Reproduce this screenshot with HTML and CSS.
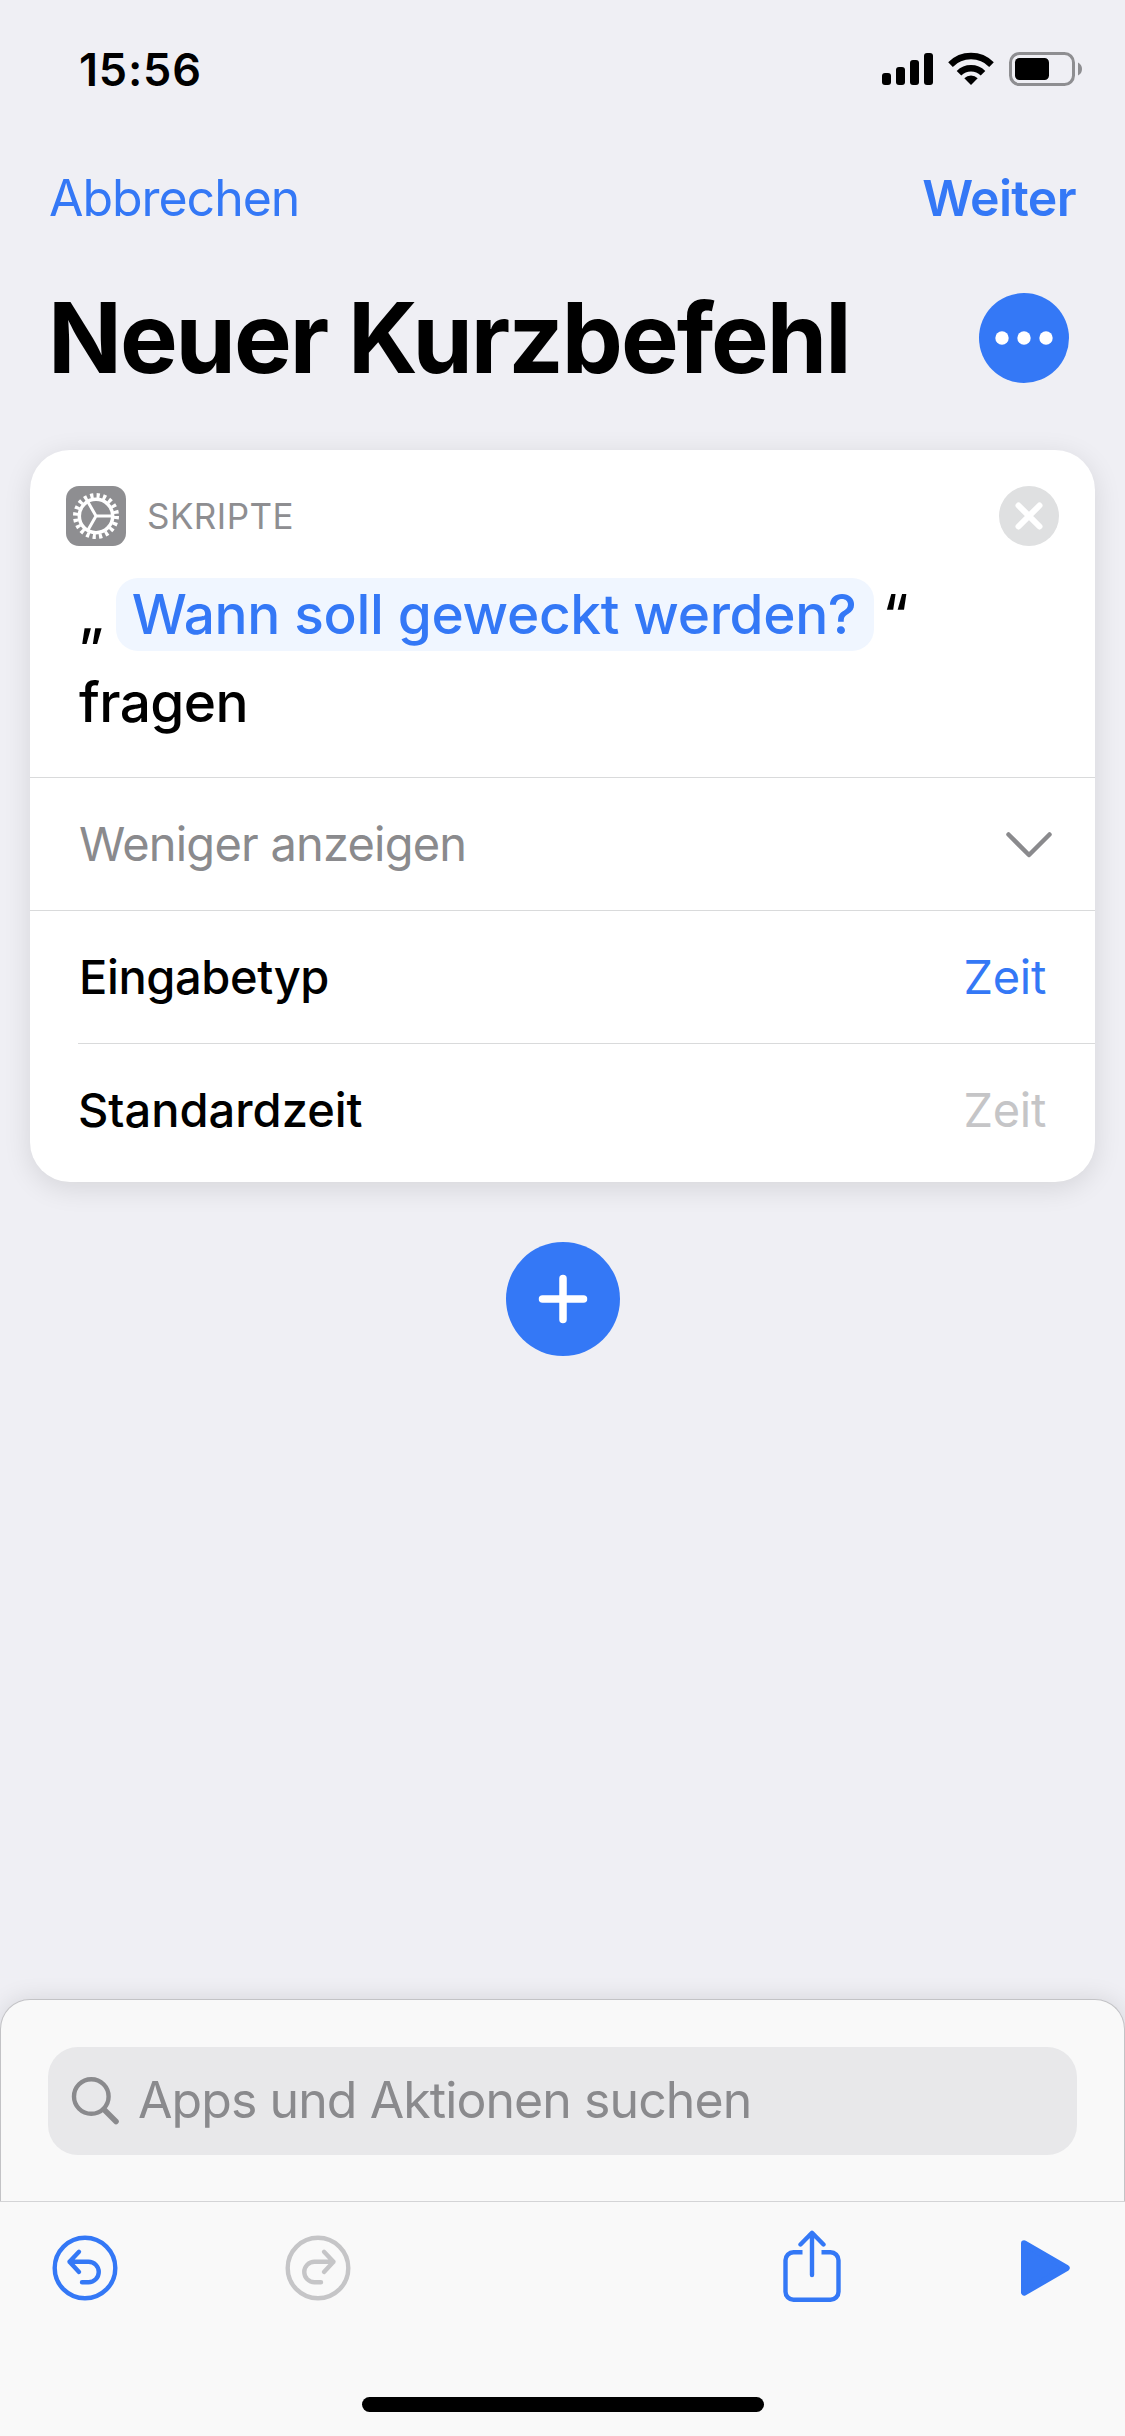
FILE: index.html
```html
<!DOCTYPE html>
<html lang="de">
<head>
<meta charset="utf-8">
<title>Neuer Kurzbefehl</title>
<link rel="stylesheet" href="styles.css">
</head>
<body>
<div class="screen">
  <header class="status">
    <span class="time">15:56</span>
    <svg class="indicators" width="202" height="36" viewBox="881 51 202 36">
      <rect x="882" y="73" width="9" height="12" rx="3"/>
      <rect x="896" y="67" width="9" height="18" rx="3"/>
      <rect x="910" y="60" width="9" height="25" rx="3"/>
      <rect x="924" y="53" width="9" height="32" rx="3"/>
      <path d="M971 85 L964.3 78.3 A9.6 9.6 0 0 1 977.7 78.3 Z"/>
      <path d="M959 73.2 A17 17 0 0 1 983 73.2" fill="none" stroke="#000" stroke-width="6.5"/>
      <path d="M950.5 64.6 A29 29 0 0 1 991.5 64.6" fill="none" stroke="#000" stroke-width="6.5"/>
      <rect x="1010.5" y="53.5" width="63" height="31" rx="9" fill="none" stroke="#8e8e91" stroke-width="3"/>
      <rect x="1015" y="58" width="34" height="22" rx="4.5"/>
      <path d="M1078 62.5 Q1082 64.5 1082 69 Q1082 73.5 1078 75.5 Z" fill="#8e8e91"/>
    </svg>
  </header>
  <nav class="nav">
    <span class="cancel">Abbrechen</span>
    <span class="next">Weiter</span>
  </nav>
  <div class="heading">
    <h1 class="title">Neuer Kurzbefehl</h1>
    <svg width="90" height="90" viewBox="0 0 90 90">
      <circle cx="45" cy="45" r="45" fill="#3478f6"/>
      <g fill="#fff"><circle cx="23" cy="45" r="6.7"/><circle cx="45" cy="45" r="6.7"/><circle cx="67" cy="45" r="6.7"/></g>
    </svg>
  </div>
  <section class="card">
    <div class="card-head">
      <svg class="gear" width="60" height="60" viewBox="0 0 60 60">
        <rect width="60" height="60" rx="13" fill="#8e8e91"/>
        <g fill="none" stroke="#fff">
          <circle cx="30" cy="30" r="20.5" stroke-width="5" stroke-dasharray="3.2 3.24"/>
          <circle cx="30" cy="30" r="16.7" stroke-width="3.5"/>
          <path d="M30 30 H46 M30 30 L22 16.1 M30 30 L22 43.9" stroke-width="3"/>
        </g>
      </svg>
      <span class="category">SKRIPTE</span>
      <svg class="close" width="60" height="60" viewBox="0 0 60 60">
        <circle cx="30" cy="30" r="30" fill="#dfe0e1"/>
        <path d="M19.5 19.5 L40.5 40.5 M40.5 19.5 L19.5 40.5" stroke="#fff" stroke-width="6" stroke-linecap="round"/>
      </svg>
    </div>
    <div class="sentence">
      <div class="line"><span class="quote open">„</span><span class="pill">Wann soll geweckt werden?</span><span class="quote">“</span></div>
      <div class="line"><span class="verb">fragen</span></div>
    </div>
    <div class="row muted">
      <span class="toggle">Weniger anzeigen</span>
      <svg class="chevron" width="46" height="26" viewBox="0 0 46 26"><path d="M2.5 2.5 L23 23 L43.5 2.5" fill="none" stroke="#8a8a8d" stroke-width="4.5" stroke-linecap="round" stroke-linejoin="round"/></svg>
    </div>
    <div class="row"><span class="label tight">Eingabetyp</span><span class="value">Zeit</span></div>
    <div class="row inset"><span class="label">Standardzeit</span><span class="value empty">Zeit</span></div>
  </section>
  <div class="add">
    <svg width="114" height="114" viewBox="0 0 114 114"><circle cx="57" cy="57" r="57" fill="#3478f6"/><path d="M57 36.5 V77.5 M36.5 57 H77.5" stroke="#fff" stroke-width="7.5" stroke-linecap="round"/></svg>
  </div>
  <footer class="bottom">
    <div class="sheet">
      <div class="search">
        <svg width="50" height="50" viewBox="0 0 50 50" fill="none" stroke="#8a8a8d" stroke-linecap="round"><circle cx="21.3" cy="21.5" r="17.3" stroke-width="4.4"/><path d="M34 34.5 L46 46.5" stroke-width="5.5"/></svg>
        <span class="placeholder">Apps und Aktionen suchen</span>
      </div>
    </div>
    <div class="toolbar">
      <svg class="undo" width="66" height="66" viewBox="0 0 66 66" fill="none" stroke="#3478f6" stroke-width="4.4" stroke-linecap="round" stroke-linejoin="round"><circle cx="33" cy="33" r="30.3"/><path d="M27 16.8 L17.5 26.7 L27 37 M17.5 26.7 H36.5 A10.25 10.25 0 0 1 36.5 47.2 H30"/></svg>
      <svg class="redo" width="66" height="66" viewBox="0 0 66 66" fill="none" stroke="#c5c5c7" stroke-width="4.4" stroke-linecap="round" stroke-linejoin="round"><circle cx="33" cy="33" r="30.3"/><path d="M39 16.8 L48.5 26.7 L39 37 M48.5 26.7 H29.5 A10.25 10.25 0 0 0 29.5 47.2 H36"/></svg>
      <svg class="share" width="58" height="72" viewBox="0 0 58 72" fill="none" stroke="#3478f6" stroke-width="4.4"><path d="M19.5 22.3 H10.5 A8 8 0 0 0 2.5 30.3 V61.7 A8 8 0 0 0 10.5 69.7 H47.5 A8 8 0 0 0 55.5 61.7 V30.3 A8 8 0 0 0 47.5 22.3 H38.5"/><path d="M29 3 V45 M17.5 14.5 L29 2.8 L40.5 14.5" stroke-linecap="round" stroke-linejoin="round"/></svg>
      <svg class="play" width="49" height="56" viewBox="0 0 49 56"><path d="M3.2 3.5 L45.5 28 L3.2 52.5 Z" fill="#3478f6" stroke="#3478f6" stroke-width="6.4" stroke-linejoin="round"/></svg>
    </div>
    <div class="home"></div>
  </footer>
</div>
</body>
</html>
```
FILE: styles.css
```css
* { box-sizing: border-box; }
body { margin: 0; background: #efeff4; font-family: Inter, "Liberation Sans", sans-serif; color: #000; }
svg { display: block; flex: none; }
.screen { width: 1125px; height: 2436px; display: flex; flex-direction: column; overflow: hidden; }
.status { height: 138px; padding: 0 42px 0 79px; display: flex; align-items: center; justify-content: space-between; }
.time { font-size: 45px; font-weight: 600; letter-spacing: .8px; }
.nav { height: 120px; padding: 0 49px; display: flex; align-items: center; justify-content: space-between; color: #3478f6; font-size: 50px; }
.cancel { letter-spacing: -1.05px; }
.next { font-weight: 600; letter-spacing: -.65px; }
.heading { height: 160px; padding: 0 56px 0 48px; display: flex; align-items: center; justify-content: space-between; }
.title { margin: 0; padding-bottom: 2px; font-size: 97px; font-weight: 700; letter-spacing: -2.05px; white-space: nowrap; }
.card { margin: 32px 30px 0; height: 732px; background: #fff; border-radius: 40px; box-shadow: 0 6px 28px rgba(0, 0, 0, .11); }
.card-head { padding: 36px 36px 0; display: flex; align-items: center; }
.category { margin-left: 21px; font-size: 35px; letter-spacing: .45px; color: #8e8e91; }
.close { margin-left: auto; }
.sentence { height: 231px; padding: 24px 49px 0; font-size: 55px; font-weight: 500; }
.line { height: 88px; display: flex; align-items: center; }
.pill { height: 73px; padding: 0 17px 0 16px; border-radius: 22px; background: #f0f6ff; color: #3478f6; display: flex; align-items: center; letter-spacing: -.35px; }
.verb { letter-spacing: -.6px; }
.quote { margin-left: 9px; }
.quote.open { margin: 0 12px 0 0; }
.row { height: 133px; padding: 0 49px 2px; border-top: 1px solid #d9dadb; display: flex; align-items: center; justify-content: space-between; font-size: 47px; }
.muted { padding-right: 43px; color: #8a8a8d; }
.toggle { letter-spacing: -.78px; }
.chevron { margin-top: 3px; }
.inset { margin-left: 48px; padding-left: 0; }
.label { font-weight: 500; }
.tight { letter-spacing: -.4px; }
.value { color: #3478f6; letter-spacing: -.3px; }
.empty { color: #c5c5c7; }
.add { margin-top: 60px; display: flex; justify-content: center; }
.bottom { margin-top: auto; height: 437px; display: flex; flex-direction: column; }
.sheet { height: 202px; padding: 47px 47px 0; background: #f9f9f9; border: 1px solid #c3c3c6; border-bottom: 0; border-radius: 30px 30px 0 0; box-shadow: 0 0 24px rgba(0, 0, 0, .11); }
.search { height: 108px; padding: 0 0 2px 22px; border-radius: 30px; background: #e8e8ea; display: flex; align-items: center; color: #8a8a8d; }
.placeholder { margin: -1px 0 0 18px; font-size: 50px; letter-spacing: -.92px; }
.toolbar { position: relative; height: 196px; background: #f9f9f9; border-top: 1px solid #d4d4d6; display: flex; align-items: flex-start; padding: 33px 55px 0 52px; }
.redo { margin-left: 167px; }
.share { margin: -5px 0 0 432px; }
.play { margin: 5px 0 0 auto; }
.home { flex: 1; background: #f9f9f9; }
.home::before { content: ""; display: block; width: 402px; height: 15px; margin: 0 auto; border-radius: 8px; background: #000; }
```
